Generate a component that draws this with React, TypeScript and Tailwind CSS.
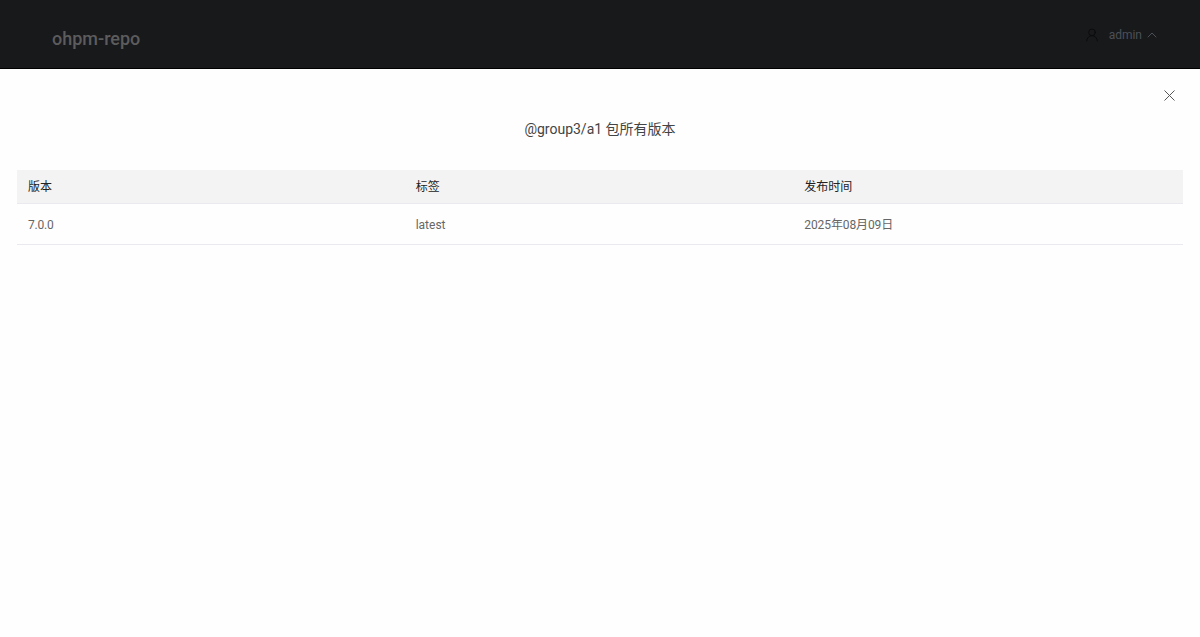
import { ChevronUp, UserRound, X } from 'lucide-react';

const FONT = "font-['Roboto','Noto_Sans_CJK_SC',sans-serif]";

const VERSIONS = [{ version: '7.0.0', tag: 'latest', date: '2025年08月09日' }];

export default function App() {
  return (
    <div className={`h-[637px] w-full flex flex-col overflow-hidden bg-[#fefefe] ${FONT}`}>
      {/* Header */}
      <header className="h-[69px] shrink-0 flex items-center justify-between bg-[#18191b] border-b border-black pl-[52px] pr-[40px]">
        <div className="text-[18px] font-medium text-[#5c5c5d] pt-[8px]">ohpm-repo</div>
        <div className="flex items-center text-[#4b5057] pt-[2px]">
          <UserRound className="w-[16px] h-[16px] text-[#0b0b0c]" strokeWidth={1.5} />
          <span className="ml-[9px] text-xs">admin</span>
          <ChevronUp className="ml-[2px] w-[16px] h-[16px]" strokeWidth={1.5} />
        </div>
      </header>

      {/* Dialog */}
      <main className="relative flex-1 px-[17px]">
        <button className="absolute right-[21px] top-[17px] text-[#555]">
          <X className="w-[19px] h-[19px]" strokeWidth={1.25} />
        </button>
        <h2 className="mt-[50px] h-[20px] leading-[20px] text-center text-sm font-normal text-[#444]">
          @group3/a1 包所有版本
        </h2>
        <table className="mt-[31px] w-full table-fixed text-xs text-left">
          <thead>
            <tr className="h-[33px] bg-[#f3f3f3] border-b border-[#e9e9f0] text-[#222]">
              <th className="pl-[11px] pt-[1px] font-normal">版本</th>
              <th className="pl-[10px] pt-[1px] font-normal">标签</th>
              <th className="pl-[10px] pt-[1px] font-normal">发布时间</th>
            </tr>
          </thead>
          <tbody>
            {VERSIONS.map((row) => (
              <tr key={row.version} className="h-[41px] border-b border-[#e9e9f0] text-[#666]">
                <td className="pl-[11px] pt-[2px] tracking-[-0.2px]">{row.version}</td>
                <td className="pl-[10px] pt-[2px]">{row.tag}</td>
                <td className="pl-[10px] pt-[2px] tracking-[-0.1px]">{row.date}</td>
              </tr>
            ))}
          </tbody>
        </table>
      </main>
    </div>
  );
}
